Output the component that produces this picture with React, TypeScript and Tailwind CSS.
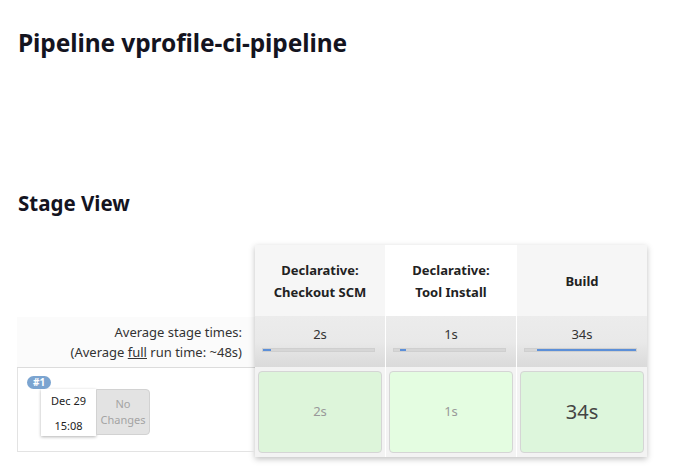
const stages = [
  { name: ["Declarative:", "Checkout SCM"], avg: "2s", head: "bg-[#f6f6f6]", cell: "bg-[#ddf5da]", off: 0, fill: 8, run: "2s", big: false },
  { name: ["Declarative:", "Tool Install"], avg: "1s", head: "bg-white", cell: "bg-[#e4fde1]", off: 6, fill: 6, run: "1s", big: false },
  { name: ["Build"], avg: "34s", head: "bg-[#f6f6f6]", cell: "bg-[#ddf6dc]", off: 12, fill: 101, run: "34s", big: true },
];

export default function App() {
  return (
    <div className="min-h-screen bg-white text-[#14141f] font-['Noto_Sans',sans-serif]">
      <h1 className="pl-[18px] pt-[27px] text-[24.5px] leading-[32px] font-bold tracking-[-0.1px]">
        Pipeline vprofile-ci-pipeline
      </h1>
      <h2 className="pl-[18px] mt-[130px] text-[20.5px] leading-[28px] font-bold">Stage View</h2>

      <div className="mt-[28px] ml-[17px] flex">
        {/* left column */}
        <div className="w-[238px] flex flex-col">
          <div className="h-[72px]" />
          <div className="h-[51px] bg-[#fbfbfb] border-b border-[#dcdcdc] flex flex-col items-end justify-center pr-[13px] text-[13px] leading-[20px] text-[#333]">
            <div>Average stage times:</div>
            <div>
              (Average <span className="underline">full</span> run time: ~48s)
            </div>
          </div>
          <div className="relative h-[84px] border-l border-b border-[#e3e3e3]">
            <span className="absolute left-[9px] top-[8px] z-10 rounded-full bg-[#7ba4d0] px-[6px] text-[10px] leading-[13px] font-bold text-white">
              #1
            </span>
            <div className="absolute left-[23px] top-[21px] flex">
              <div className="w-[55px] h-[47px] bg-white shadow-[0_1px_3px_rgba(0,0,0,0.3)] flex flex-col items-center justify-center text-[11px] leading-[25px] text-[#222]">
                <div>Dec 29</div>
                <div>15:08</div>
              </div>
              <div className="w-[54px] h-[46px] bg-[#e3e3e3] border border-[#d2d2d2] rounded-r-[4px] flex flex-col items-center justify-center text-[11px] leading-[16px] text-[#a3a3a3]">
                <div>No</div>
                <div>Changes</div>
              </div>
            </div>
          </div>
        </div>

        {/* stage columns */}
        <div className="flex gap-px bg-white shadow-[0_2px_6px_rgba(0,0,0,0.25)]">
          {stages.map((s, i) => (
            <div key={i} className="w-[130px] flex flex-col">
              <div className={`h-[71px] ${s.head} flex flex-col items-center justify-center text-[13px] leading-[22px] font-bold text-[#222]`}>
                {s.name.map((n) => (
                  <div key={n}>{n}</div>
                ))}
              </div>
              <div className="h-[51px] bg-gradient-to-b from-[#ececec] via-[#e9e9e9] to-[#dadada] pt-[9px] flex flex-col items-center">
                <div className="text-[13px] leading-[18px] text-[#333]">{s.avg}</div>
                <div className="mt-[5px] ml-[-4px] w-[113px] h-[4px] bg-[#d6d6d6] border border-[#cfcfcf] flex">
                  <div className="h-full bg-[#5c8fd8]" style={{ marginLeft: s.off, width: s.fill }} />
                </div>
              </div>
              <div className="h-[90px] bg-[#f3f3f3] p-[3px] pt-[4px]">
                <div
                  className={`h-[82px] ${s.cell} rounded-[4px] border border-[#d5d5d5] flex items-center justify-center ${
                    s.big ? "text-[20px] text-[#444]" : "text-[13px] text-[#999]"
                  }`}
                >
                  {s.run}
                </div>
              </div>
            </div>
          ))}
        </div>
      </div>
    </div>
  );
}
